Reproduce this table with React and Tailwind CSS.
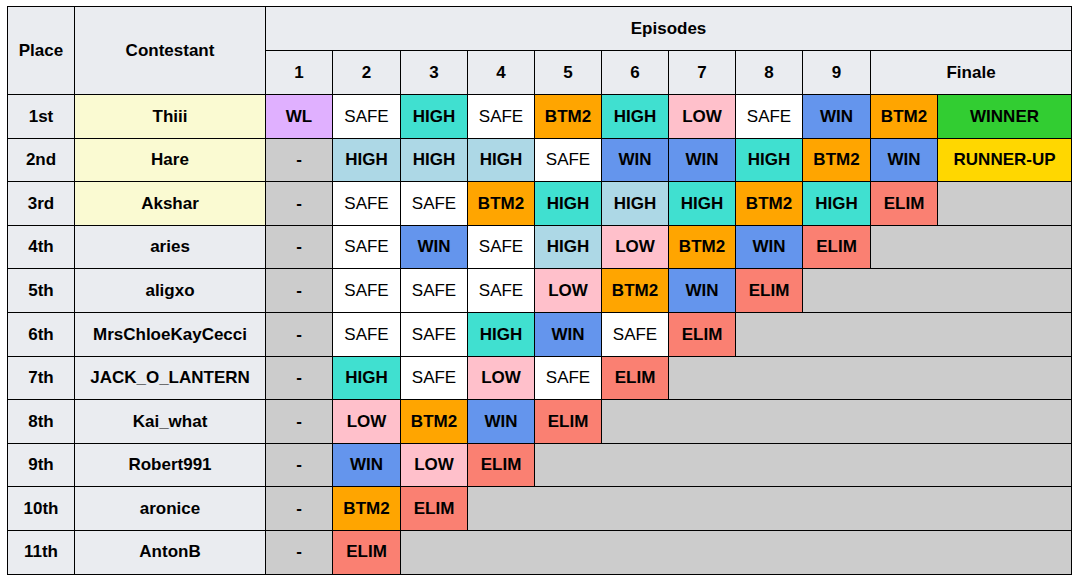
import React from "react";

// colour per result, full class names so tailwind picks them up
const COLORS = {
  WL: "bg-[#e0b0ff] font-bold",
  SAFE: "bg-white font-normal",
  HIGH: "bg-[#40e0d0] font-bold",
  HIGHB: "bg-[#add8e6] font-bold",
  BTM2: "bg-[#ffa500] font-bold",
  LOW: "bg-[#ffc0cb] font-bold",
  WIN: "bg-[#6495ed] font-bold",
  ELIM: "bg-[#fa8072] font-bold",
  WINNER: "bg-[#32cd32] font-bold",
  "RUNNER-UP": "bg-[#ffd700] font-bold",
  "-": "bg-[#cccccc] font-bold",
};

const rows = [
  { place: "1st", name: "Thiii", top: true, res: ["WL", "SAFE", "HIGH", "SAFE", "BTM2", "HIGH", "LOW", "SAFE", "WIN", "BTM2", "WINNER"] },
  { place: "2nd", name: "Hare", top: true, res: ["-", "HIGHB", "HIGHB", "HIGHB", "SAFE", "WIN", "WIN", "HIGH", "BTM2", "WIN", "RUNNER-UP"] },
  { place: "3rd", name: "Akshar", top: true, res: ["-", "SAFE", "SAFE", "BTM2", "HIGH", "HIGHB", "HIGH", "BTM2", "HIGH", "ELIM"] },
  { place: "4th", name: "aries", res: ["-", "SAFE", "WIN", "SAFE", "HIGHB", "LOW", "BTM2", "WIN", "ELIM"] },
  { place: "5th", name: "aligxo", res: ["-", "SAFE", "SAFE", "SAFE", "LOW", "BTM2", "WIN", "ELIM"] },
  { place: "6th", name: "MrsChloeKayCecci", res: ["-", "SAFE", "SAFE", "HIGH", "WIN", "SAFE", "ELIM"] },
  { place: "7th", name: "JACK_O_LANTERN", res: ["-", "HIGH", "SAFE", "LOW", "SAFE", "ELIM"] },
  { place: "8th", name: "Kai_what", res: ["-", "LOW", "BTM2", "WIN", "ELIM"] },
  { place: "9th", name: "Robert991", res: ["-", "WIN", "LOW", "ELIM"] },
  { place: "10th", name: "aronice", res: ["-", "BTM2", "ELIM"] },
  { place: "11th", name: "AntonB", res: ["-", "ELIM"] },
];

const TOTAL = 11;
const cell = "border border-black text-center p-0";
const head = "border border-black text-center p-0 bg-[#eaecf0] font-bold";

export default function App() {
  return (
    <div className="pl-[7px] pt-[6px] bg-white min-h-screen font-['Liberation_Sans',Arial,sans-serif] text-[17px] text-black">
      <table className="table-fixed border-collapse w-[1064px]">
        <colgroup>
          <col className="w-[67px]" />
          <col className="w-[191px]" />
          <col className="w-[67px]" />
          <col className="w-[68px]" />
          <col className="w-[67px]" />
          <col className="w-[67px]" />
          <col className="w-[67px]" />
          <col className="w-[67px]" />
          <col className="w-[67px]" />
          <col className="w-[67px]" />
          <col className="w-[68px]" />
          <col className="w-[67px]" />
          <col className="w-[134px]" />
        </colgroup>
        <thead>
          <tr className="h-[44px]">
            <th rowSpan={2} className={head}>Place</th>
            <th rowSpan={2} className={head}>Contestant</th>
            <th colSpan={11} className={head}>Episodes</th>
          </tr>
          <tr className="h-[44px]">
            {[1, 2, 3, 4, 5, 6, 7, 8, 9].map((n) => (
              <th key={n} className={head}>{n}</th>
            ))}
            <th colSpan={2} className={head}>Finale</th>
          </tr>
        </thead>
        <tbody>
          {rows.map((r) => (
            <tr key={r.place} className="h-[43.6px]">
              <td className={`${cell} bg-[#eaecf0] font-bold`}>{r.place}</td>
              <td className={`${cell} font-bold ${r.top ? "bg-[#fafad2]" : "bg-[#eaecf0]"}`}>{r.name}</td>
              {r.res.map((v, i) => (
                <td key={i} className={`${cell} ${COLORS[v]}`}>{v === "HIGHB" ? "HIGH" : v}</td>
              ))}
              {r.res.length < TOTAL && (
                <td colSpan={TOTAL - r.res.length} className={`${cell} bg-[#cccccc]`}></td>
              )}
            </tr>
          ))}
        </tbody>
      </table>
    </div>
  );
}
